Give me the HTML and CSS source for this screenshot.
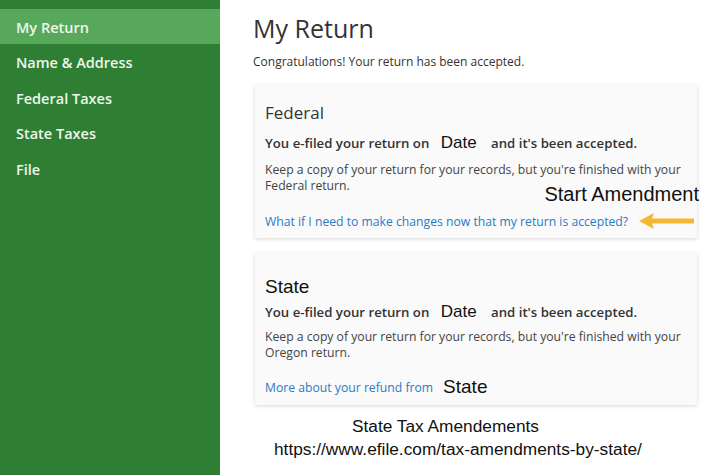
FILE: index.html
```html
<!DOCTYPE html>
<html lang="en">
<head>
    <meta charset="UTF-8">
    <meta name="viewport" content="width=device-width, initial-scale=1.0">
    <title>My Return</title>
    <link rel="stylesheet" href="styles.css">
</head>
<body>
    <div class="page">
        <nav class="sidebar">
            <a class="nav-item active">My Return</a>
            <a class="nav-item">Name &amp; Address</a>
            <a class="nav-item">Federal Taxes</a>
            <a class="nav-item">State Taxes</a>
            <a class="nav-item">File</a>
        </nav>

        <main class="content">
            <h1>My Return</h1>
            <p class="intro">Congratulations! Your return has been accepted.</p>

            <div class="card">
                <h2>Federal</h2>
                <p class="filed">You e-filed your return on <span class="note date">Date</span> and it's been accepted.</p>
                <p class="body">Keep a copy of your return for your records, but you're finished with your</p>
                <div class="body-row">
                    <p class="body">Federal return.</p>
                    <span class="amend-label note">Start Amendment</span>
                </div>
                <div class="link-row">
                    <a class="link">What if I need to make changes now that my return is accepted?</a>
                    <svg class="arrow" width="58" height="18" viewBox="0 0 58 18">
                        <path d="M2 9 L17 1 L15 6.5 L57 6.5 L57 11.5 L15 11.5 L17 17 Z" fill="#f5b731"/>
                    </svg>
                </div>
            </div>

            <div class="card state">
                <h2 class="note">State</h2>
                <p class="filed">You e-filed your return on <span class="note date">Date</span> and it's been accepted.</p>
                <p class="body">Keep a copy of your return for your records, but you're finished with your</p>
                <p class="body">Oregon return.</p>
                <div class="link-row">
                    <a class="link">More about your refund from</a>
                    <span class="note state-name">State</span>
                </div>
            </div>

            <div class="footer-note note">
                <div class="footer-title">State Tax Amendements</div>
                <div class="footer-url">https://www.efile.com/tax-amendments-by-state/</div>
            </div>
        </main>
    </div>
</body>
</html>
```

FILE: styles.css
```css
body {
    margin: 0;
    padding: 0;
    font-family: "Open Sans", sans-serif;
    color: #333;
    background: #fff;
}

.page {
    display: flex;
    width: 720px;
    height: 475px;
    overflow: hidden;
}

.sidebar {
    width: 220px;
    flex-shrink: 0;
    background-color: #2e7f34;
    padding-top: 9px;
    display: flex;
    flex-direction: column;
}

.nav-item {
    display: block;
    height: 35.5px;
    line-height: 38px;
    padding-left: 16px;
    color: #eef6ec;
    font-size: 14.5px;
    font-weight: 600;
}

.nav-item.active {
    height: 35px;
    line-height: 37px;
    background-color: #58a85b;
}

.content {
    flex: 1;
    padding: 13px 0 0 33px;
}

h1 {
    font-size: 25px;
    font-weight: 400;
    margin: 0;
    line-height: 30px;
    color: #333;
}

.intro {
    font-size: 12px;
    line-height: 16px;
    margin: 11px 0 0;
}

.note {
    font-family: "Liberation Sans", Arial, sans-serif;
    color: #111;
    font-weight: 400;
}

.card {
    width: 442px;
    margin: 15px 0 0 2px;
    padding: 16px 10px 8px;
    box-sizing: border-box;
    background-color: #fafafb;
    box-shadow: 0 1px 4px rgba(0, 0, 0, 0.16);
}

.card h2 {
    font-size: 17px;
    font-weight: 400;
    margin: 0;
    line-height: 24px;
    color: #333;
}

.filed {
    font-size: 13.2px;
    font-weight: 600;
    margin: 9px 0 0;
    line-height: 18px;
    white-space: nowrap;
}

.date {
    font-size: 17px;
    margin: 0 11px 0 8px;
}

.body {
    font-size: 12.2px;
    line-height: 16px;
    margin: 0;
    color: #444;
    white-space: nowrap;
}

.filed + .body {
    margin-top: 10px;
}

.body-row {
    display: flex;
    justify-content: space-between;
    align-items: flex-start;
}

.amend-label {
    font-size: 20px;
    line-height: 20px;
    margin: 6px -12px 0 0;
}

.link-row {
    display: flex;
    align-items: center;
    height: 18px;
    margin-top: 8px;
    white-space: nowrap;
}

.link {
    font-size: 12.2px;
    color: #2b7bc4;
}

.arrow {
    flex-shrink: 0;
    margin-left: 9px;
}

.card.state {
    margin-top: 15px;
    padding-top: 23px;
    padding-bottom: 7px;
}

.card.state h2 {
    font-size: 19px;
    line-height: 22px;
    color: #111;
}

.card.state .filed {
    margin-top: 5px;
}

.card.state .filed + .body {
    margin-top: 8px;
}

.card.state .link-row {
    height: 22px;
    margin-top: 15px;
}

.state-name {
    font-size: 19px;
    margin-left: 10px;
}

.footer-note {
    font-size: 17.3px;
    line-height: 23px;
    margin-top: 10px;
}

.footer-title {
    padding-left: 99px;
}

.footer-url {
    padding-left: 21px;
}
```
